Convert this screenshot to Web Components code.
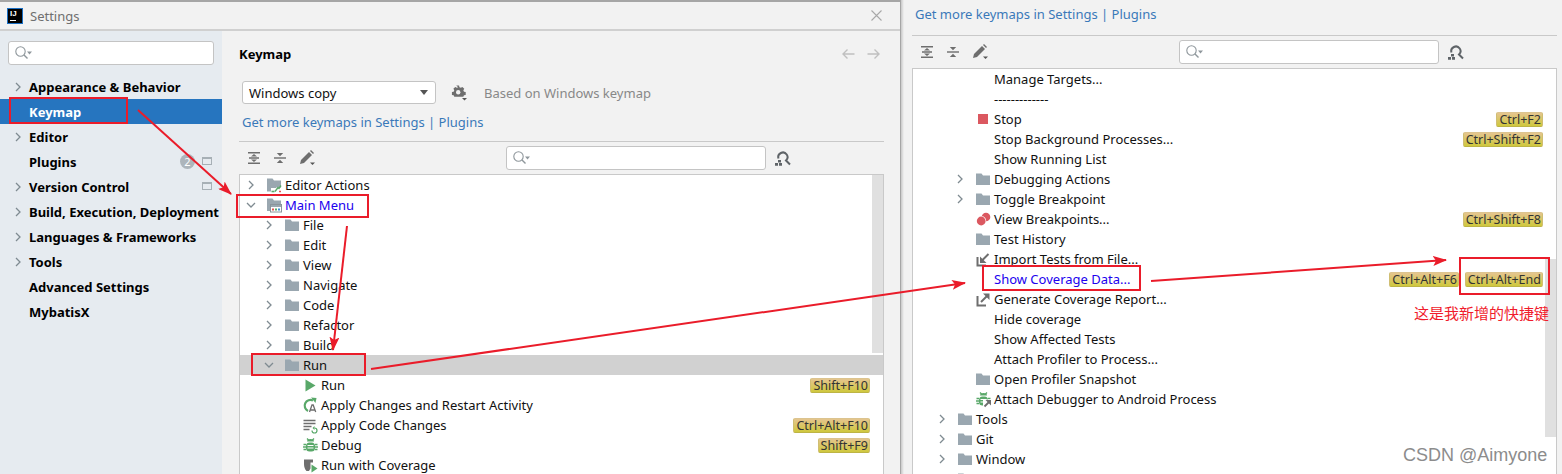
<!DOCTYPE html>
<html><head><meta charset="utf-8">
<style>
html,body{margin:0;padding:0;background:#f2f2f2;height:474px;overflow:hidden}
body{font-family:"Noto Sans","Noto Sans CJK SC",sans-serif;font-size:13px;color:#000;position:relative}
#stage{display:flex;height:474px;overflow:hidden}
</style></head><body>
<div id="stage">
<settings-dialog>
  <side-item slot="side" arrow label="Appearance &amp; Behavior"></side-item>
  <side-item slot="side" selected label="Keymap"></side-item>
  <side-item slot="side" arrow label="Editor"></side-item>
  <side-item slot="side" label="Plugins" badge="2" proj></side-item>
  <side-item slot="side" arrow label="Version Control" proj></side-item>
  <side-item slot="side" arrow label="Build, Execution, Deployment"></side-item>
  <side-item slot="side" arrow label="Languages &amp; Frameworks"></side-item>
  <side-item slot="side" arrow label="Tools"></side-item>
  <side-item slot="side" label="Advanced Settings"></side-item>
  <side-item slot="side" label="MybatisX"></side-item>
  <keymap-tree slot="tree" thumb="0,178">
    <tree-row depth="0" arrow="r" icon="editor" label="Editor Actions"></tree-row>
    <tree-row depth="0" arrow="d" icon="menu" label="Main Menu" link></tree-row>
    <tree-row depth="1" arrow="r" icon="folder" label="File"></tree-row>
    <tree-row depth="1" arrow="r" icon="folder" label="Edit"></tree-row>
    <tree-row depth="1" arrow="r" icon="folder" label="View"></tree-row>
    <tree-row depth="1" arrow="r" icon="folder" label="Navigate"></tree-row>
    <tree-row depth="1" arrow="r" icon="folder" label="Code"></tree-row>
    <tree-row depth="1" arrow="r" icon="folder" label="Refactor"></tree-row>
    <tree-row depth="1" arrow="r" icon="folder" label="Build"></tree-row>
    <tree-row depth="1" arrow="d" icon="folder" label="Run" selected></tree-row>
    <tree-row depth="2" icon="run" label="Run" keys="Shift+F10"></tree-row>
    <tree-row depth="2" icon="applyrestart" label="Apply Changes and Restart Activity"></tree-row>
    <tree-row depth="2" icon="applycode" label="Apply Code Changes" keys="Ctrl+Alt+F10"></tree-row>
    <tree-row depth="2" icon="debug" label="Debug" keys="Shift+F9"></tree-row>
    <tree-row depth="2" icon="coverage" label="Run with Coverage"></tree-row>
  </keymap-tree>
</settings-dialog>
<keymap-panel>
  <keymap-tree thumb="190,178">
    <tree-row depth="2" label="Manage Targets..."></tree-row>
    <tree-row depth="2" label="-------------"></tree-row>
    <tree-row depth="2" icon="stop" label="Stop" keys="Ctrl+F2"></tree-row>
    <tree-row depth="2" label="Stop Background Processes..." keys="Ctrl+Shift+F2"></tree-row>
    <tree-row depth="2" label="Show Running List"></tree-row>
    <tree-row depth="2" arrow="r" icon="folder" label="Debugging Actions"></tree-row>
    <tree-row depth="2" arrow="r" icon="folder" label="Toggle Breakpoint"></tree-row>
    <tree-row depth="2" icon="breakpoints" label="View Breakpoints..." keys="Ctrl+Shift+F8"></tree-row>
    <tree-row depth="2" icon="folder" label="Test History"></tree-row>
    <tree-row depth="2" icon="import" label="Import Tests from File..."></tree-row>
    <tree-row depth="2" label="Show Coverage Data..." link keys="Ctrl+Alt+F6" keys2="Ctrl+Alt+End"></tree-row>
    <tree-row depth="2" icon="export" label="Generate Coverage Report..."></tree-row>
    <tree-row depth="2" label="Hide coverage"></tree-row>
    <tree-row depth="2" label="Show Affected Tests"></tree-row>
    <tree-row depth="2" label="Attach Profiler to Process..."></tree-row>
    <tree-row depth="2" icon="folder" label="Open Profiler Snapshot"></tree-row>
    <tree-row depth="2" icon="attach" label="Attach Debugger to Android Process"></tree-row>
    <tree-row depth="1" arrow="r" icon="folder" label="Tools"></tree-row>
    <tree-row depth="1" arrow="r" icon="folder" label="Git"></tree-row>
    <tree-row depth="1" arrow="r" icon="folder" label="Window"></tree-row>
    <tree-row depth="1" arrow="r" icon="folder" label="Help"></tree-row>
  </keymap-tree>
</keymap-panel>
</div>
<annotation-layer></annotation-layer>
<script>
const ICONS={
folder:'<path d="M1 2.5h5.5l1.5 2h7v9.5H1z" fill="#9aa7b0"/>',
editor:'<path d="M1 1.5h5.5l1.5 2h7v7H10v4H1z" fill="#9aa7b0"/><rect x="5" y="11" width="10" height="4" fill="#fff"/><path d="M5.5 14.5h3" stroke="#59a869" stroke-width="1.6"/><path d="M9 14.5l3-4 1 1 2-3" stroke="#59a869" stroke-width="1.4" fill="none"/><path d="M13 14.5h2" stroke="#e05555" stroke-width="1.6"/>',
menu:'<path d="M1 1.5h5.5l1.5 2h7v4H1z" fill="#9aa7b0"/><path d="M1 7h4v7H1z" fill="#9aa7b0"/><rect x="4.5" y="7.5" width="11" height="7.5" fill="#fff" stroke="#8a949b"/><rect x="5" y="8" width="10" height="2" fill="#9aa7b0"/><rect x="6" y="11.5" width="2" height="2" fill="#e05555"/><rect x="9" y="11.5" width="2" height="2" fill="#59a869"/><rect x="12" y="11.5" width="2" height="2" fill="#3d8fd6"/>',
run:'<path d="M3.5 2.5l10 6-10 6z" fill="#59a869"/>',
applyrestart:'<path d="M11 3.5A5.5 5.5 0 1 0 6 14" stroke="#59a869" stroke-width="2.2" fill="none"/><path d="M9 0.5l5.5 .5-1 5z" fill="#59a869"/><text/><path d="M7.5 15l2.5-7h1.2l2.5 7m-5-2h4" stroke="#6e6e6e" stroke-width="1.3" fill="none"/>',
applycode:'<path d="M1.5 3.5h12M1.5 6.5h12M1.5 9.5h8M1.5 12.5h6" stroke="#6e6e6e" stroke-width="1.4"/><path d="M10 13.5a2.5 2.5 0 1 0 2.5-2.5" stroke="#59a869" stroke-width="1.2" fill="none"/><path d="M12.5 9l-2 2 2 2z" fill="#59a869"/>',
debug:'<path d="M5 4.5a3.5 2.5 0 0 1 7 0z" fill="#59a869"/><rect x="4" y="5.5" width="9" height="9" rx="3.5" fill="#59a869"/><path d="M4 7.5H1.5M4 10h-3M4 12.5H1.5M13 7.5h2.5M13 10h3M13 12.5h2.5M5 1.5l2 2M12 1.5l-2 2" stroke="#59a869" stroke-width="1.3"/><path d="M5.5 8.5h6M5.5 11h6" stroke="#fff" stroke-width="1"/>',
coverage:'<path d="M2 2.5h9v3H8.5v6L7 14H4.5C3 12.5 2 10 2 7z" fill="#6e6e6e"/><path d="M9.5 7.5l6 4-6 4z" fill="#59a869"/>',
stop:'<rect x="3" y="3" width="10" height="10" fill="#db5860"/>',
breakpoints:'<circle cx="11" cy="6" r="4.3" fill="#db5860"/><circle cx="6.2" cy="10" r="5" fill="#fff"/><circle cx="6.2" cy="10" r="4.4" fill="#db5860"/>',
import:'<path d="M2.5 6v8.5H11" stroke="#6e6e6e" stroke-width="2" fill="none"/><path d="M13.5 3L7 9.5" stroke="#6e6e6e" stroke-width="2"/><path d="M5 5.5v6.5h6.5z" fill="#6e6e6e"/>',
export:'<path d="M2.5 5v9.5H11" stroke="#6e6e6e" stroke-width="2" fill="none"/><path d="M6 11l6-6" stroke="#6e6e6e" stroke-width="2"/><path d="M8 2.5h6.5V9z" fill="#6e6e6e"/>',
attach:'<path d="M5 4.5a3.5 2.5 0 0 1 7 0z" fill="#59a869"/><rect x="4" y="5.5" width="9" height="9" rx="3.5" fill="#59a869"/><path d="M4 7.5H1.5M4 10h-3M4 12.5H1.5M13 7.5h2.5M5 1.5l2 2M12 1.5l-2 2" stroke="#59a869" stroke-width="1.3"/><path d="M5.5 8.5h6M5.5 11h4" stroke="#fff" stroke-width="1"/><rect x="8" y="8.5" width="9" height="9" fill="#fff"/><path d="M9.5 15.5l5-5" stroke="#6e6e6e" stroke-width="1.8"/><path d="M10.5 9h5.5v5.5z" fill="#6e6e6e"/>'
};
const TB={
expand:'<svg width="14" height="14" viewBox="0 0 14 14"><path d="M1 1h12v1.5H1zM1 11.5h12V13H1zM2 6.3h10v1.4H2z" fill="#6e6e6e"/><path d="M7 3l3 2.6H4zM7 11l3-2.6H4z" fill="#6e6e6e"/></svg>',
collapse:'<svg width="14" height="14" viewBox="0 0 14 14"><path d="M1 6.3h12v1.4H1z" fill="#6e6e6e"/><path d="M7 5.3l3.2-3.3H3.8zM7 8.7l3.2 3.3H3.8z" fill="#6e6e6e"/></svg>',
pencil:'<svg width="18" height="16" viewBox="0 0 18 16"><path d="M1 14l1-4L10 2l3 3-8 8z" fill="#6e6e6e"/><path d="M11 1l1-1 3 3-1 1z" fill="#6e6e6e"/><path d="M11 12.5h5l-2.5 2.5z" fill="#555"/></svg>',
mag:'<svg width="20" height="16" viewBox="0 0 20 16"><circle cx="6.5" cy="6.5" r="4.7" fill="none" stroke="#8f979c" stroke-width="1.1"/><path d="M10 10l3.5 3.5" stroke="#8f979c" stroke-width="1.4"/><path d="M13 6.5h5l-2.5 3z" fill="#8f979c"/></svg>',
find:'<svg width="16" height="15" viewBox="0 0 16 15"><path d="M3.5 7.5a4.6 4.6 0 1 1 7.5 2l4 4" fill="none" stroke="#5f6468" stroke-width="2"/><path d="M3 9h3v2.5H3zM0 12h3v2.7H0zM4 12h3v2.7H4z" fill="#5f6468"/></svg>'
};
function def(name,html,init){customElements.define(name,class extends HTMLElement{constructor(){super();this.attachShadow({mode:'open'})}connectedCallback(){this.shadowRoot.innerHTML=typeof html==='function'?html(this):html;init&&init(this)}})}
const esc=s=>(s||'').replace(/&/g,'&amp;').replace(/</g,'&lt;');
const chev=d=>d==='d'?'<svg width="12" height="12" viewBox="0 0 12 12"><path d="M2 4l4 4 4-4" fill="none" stroke="#7f8b91" stroke-width="1.3"/></svg>':'<svg width="12" height="12" viewBox="0 0 12 12"><path d="M4 2l4 4-4 4" fill="none" stroke="#7f8b91" stroke-width="1.3"/></svg>';

def('search-box',h=>`<style>:host{display:flex;align-items:center;box-sizing:border-box;height:24px;width:${h.getAttribute('w')}px;background:#fff;border:1px solid #c4c4c4;border-radius:3px;padding-left:5px}</style>${TB.mag}`);

def('key-badge',`<style>:host{display:inline-block;box-sizing:border-box;height:15px;line-height:13px;padding:0 1px 0 2px;font-size:12.5px;color:#333;background:linear-gradient(#e5c58f,#cfc83d);border:1px solid #d0be73;border-top-color:#dcc48f;border-bottom-color:#bdb445;border-radius:2px;white-space:nowrap}</style><slot></slot>`);

def('tree-row',h=>{
 const d=+h.getAttribute('depth')||0,ic=h.getAttribute('icon'),a=h.getAttribute('arrow');
 const k=h.getAttribute('keys'),k2=h.getAttribute('keys2');
 return `<style>
 :host{display:flex;align-items:center;height:20px;box-sizing:border-box;padding-left:${5+18*d}px;padding-right:${h.hasAttribute('selected')?0:13}px;white-space:nowrap;color:#111;background:${h.hasAttribute('selected')?'#d1d1d1':'transparent'};position:relative;z-index:${h.hasAttribute('selected')?1:0}}
 .a{width:12px;height:12px;flex:none;margin-right:9px;display:flex}
 .i{width:16px;height:16px;flex:none;margin-right:3px;display:block}
 .t{flex:1;color:${h.hasAttribute('link')?'#2000ee':'#111'}}
 .k{display:flex;gap:4px}
 </style><span class="a">${a?chev(a):''}</span><span class="i">${ic?`<svg width="18" height="18" viewBox="0 0 18 18" style="overflow:visible;display:block">${ICONS[ic]}</svg>`:''}</span><span class="t">${esc(h.getAttribute('label'))}</span><span class="k">${k?`<key-badge>${k}</key-badge>`:''}${k2?`<key-badge style="margin-left:2px">${k2}</key-badge>`:''}</span>`});

def('keymap-tree',h=>{
 const [t,ht]=(h.getAttribute('thumb')||'0,0').split(',');
 return `<style>:host{display:block;flex:1;box-sizing:border-box;background:#fff;border:1px solid #c9c9c9;border-bottom:none;overflow:hidden;position:relative}
 .thumb{position:absolute;right:0;top:${t}px;height:${ht}px;width:11px;background:#e0e0e0;z-index:0}</style><div class="thumb"></div><slot></slot>`});

def('key-toolbar',h=>`<style>:host{display:flex;align-items:center;height:32px;box-sizing:border-box;padding:0 0 0 8px;flex:none}
 .b{display:flex;align-items:center;width:26px}
 search-box{margin-left:${h.getAttribute('gap')}px}
 .f{margin-left:9px;display:flex}</style>
 <span class="b">${TB.expand}</span><span class="b">${TB.collapse}</span><span class="b">${TB.pencil}</span><search-box w="${h.getAttribute('w')}"></search-box><span class="f">${TB.find}</span>`);

def('side-item',h=>{
 const sel=h.hasAttribute('selected');
 return `<style>:host{display:flex;align-items:center;height:25px;padding-left:12px;background:${sel?'#2675bf':'transparent'};color:${sel?'#fff':'#000'};font-weight:700;font-size:13px;white-space:nowrap;position:relative}
 .a{width:12px;height:12px;margin-right:5px;display:flex}
 .r{position:absolute;left:180px;top:5px;width:15px;height:15px;border-radius:50%;background:#adb5bb;color:#fff;font-size:11px;font-weight:400;line-height:15px;text-align:center}
 .p{position:absolute;left:202px;top:8px;width:10px;height:8px;box-sizing:border-box;border:1px solid #a7b0b6;border-top-width:2px}
 </style><span class="a">${h.hasAttribute('arrow')?chev('r'):''}</span><span>${esc(h.getAttribute('label'))}</span>${h.getAttribute('badge')?`<span class="r">${h.getAttribute('badge')}</span>`:''}${h.hasAttribute('proj')?'<span class="p"></span>':''}`});

def('settings-dialog',`<style>
 :host{display:flex;flex-direction:column;width:901px;flex:none;box-sizing:border-box;height:474px;background:#f2f2f2;border-top:2px solid #a6a6a6;border-right:1px solid #a6a6a6}
 .title{display:flex;align-items:center;height:27px;flex:none;border-bottom:2px solid #d0d0d0;box-sizing:content-box;padding:0 17px 0 7px;color:#6f6f6f;font-size:13px;margin-bottom:0}
 .logo{width:16px;height:16px;box-sizing:border-box;background:#000;border:1px solid #1a6fc4;color:#fff;font:700 8px/10px "Liberation Sans",sans-serif;letter-spacing:0;padding-left:2px;margin-right:7px;position:relative}
 .logo:after{content:"";position:absolute;left:2px;bottom:2px;width:6px;height:1px;background:#fff}
 .close{margin-left:auto;display:flex}
 .body{display:flex;flex:1;min-height:0}
 .side{width:222px;flex:none;background:#e6ebf0;display:flex;flex-direction:column}
 .sr{padding:10px 8px 9px}
 .main{flex:1;min-width:0;display:flex;flex-direction:column;padding:0 16px 0 17px}
 .h{display:flex;align-items:center;justify-content:space-between;font-weight:700;height:44px;flex:none;padding-right:3px;margin-top:1px}
 .nav{display:flex;gap:12px}
 .combo-row{display:flex;align-items:center;padding-left:3px;height:23px;margin-top:5px;flex:none}
 .combo{display:flex;align-items:center;justify-content:space-between;box-sizing:border-box;width:194px;height:23px;background:#fff;border:1px solid #c4c4c4;border-radius:3px;padding:0 7px 0 6px;color:#111}
 .tri{width:0;height:0;border:4.5px solid transparent;border-top:5.5px solid #555;border-bottom:0}
 .gear{margin:0 16px 0 15px;display:flex}
 .based{color:#888}
 .link{color:#3a79b9;padding-left:3px;height:25px;line-height:25px;margin-top:6px;flex:none}
 .sep{height:1px;background:#c9c9c9;flex:none;margin-top:6px}
 </style>
 <div class="title"><span class="logo">IJ</span><span>Settings</span><span class="close"><svg width="13" height="13" viewBox="0 0 13 13"><path d="M1.5 1.5l10 10M11.5 1.5l-10 10" stroke="#a8a8a8" stroke-width="1.1"/></svg></span></div>
 <div class="body"><div class="side"><div class="sr"><search-box w="206"></search-box></div><slot name="side"></slot></div>
 <div class="main">
  <div class="h"><span>Keymap</span><span class="nav"><svg width="14" height="12" viewBox="0 0 14 12"><path d="M13.5 6H2M6.5 1.5L2 6l4.5 4.5" fill="none" stroke="#c0c0c0" stroke-width="1.4"/></svg><svg width="14" height="12" viewBox="0 0 14 12"><path d="M.5 6H12M7.500 1.500L12 6l-4.500 4.500" fill="none" stroke="#c0c0c0" stroke-width="1.400"/></svg></span></div>
  <div class="combo-row"><span class="combo"><span>Windows copy</span><span class="tri"></span></span><span class="gear"><svg width="17" height="16" viewBox="0 0 17 16"><path d="M6 1h3l.4 1.800 1.500.7 1.600-1 2 2-1 1.600.7 1.500 1.800.4v0h-.0v3l-1.800.4-.7 1.500H4l-.7-1.500L1.500 11V8l1.800-.4.700-1.500-1-1.600 2-2 1.600 1 1.500-.7z" fill="#6e6e6e" transform="translate(-.5 -.5) scale(.95)"/><circle cx="7.200" cy="7.200" r="2.200" fill="#f2f2f2"/><path d="M11 13h5l-2.500 2.500z" fill="#555"/></svg></span><span class="based">Based on Windows keymap</span></div>
  <div class="link">Get more keymaps in Settings | Plugins</div>
  <div class="sep"></div>
  <key-toolbar gap="181" w="260"></key-toolbar>
  <slot name="tree"></slot>
 </div></div>`);

def('keymap-panel',`<style>
 :host{display:flex;flex-direction:column;flex:1;min-width:0;box-sizing:border-box;height:474px;padding:0 5px 0 11px;background:linear-gradient(90deg,#c8c8c8 0,#f2f2f2 3px)}
 .link{color:#3a79b9;height:29px;line-height:29px;padding-left:3px;flex:none}
 .sep{height:1px;background:#c9c9c9;flex:none;margin-top:6px}
 ::slotted(keymap-tree){flex:1}
 </style><div class="link">Get more keymaps in Settings | Plugins</div><div class="sep"></div><key-toolbar gap="181" w="260"></key-toolbar><slot></slot>`);

def('annotation-layer',`<style>
 :host{position:absolute;left:0;top:0;width:1562px;height:474px;pointer-events:none;z-index:5;display:block}
 svg{position:absolute;left:0;top:0}
 .note{position:absolute;left:1414px;top:303px;font:15px/20px "Noto Sans CJK SC",sans-serif;color:#f01c2c;white-space:nowrap}
 .wm{position:absolute;left:1403px;top:443px;font:18px/24px "Liberation Sans",sans-serif;color:#8c8c8c;white-space:nowrap;text-shadow:0 0 1px #fff}
 </style>
 <svg width="1562" height="474"><defs><marker id="m" markerUnits="userSpaceOnUse" markerWidth="14" markerHeight="10" refX="13" refY="5" orient="auto"><path d="M0 0l14 5-14 5 3-5z" fill="#ea1c2a"/></marker></defs>
 <g fill="none" stroke="#ea1c2a" stroke-width="2">
 <rect x="10" y="98" width="117" height="25"/><rect x="237" y="195" width="131" height="22"/><rect x="252" y="354" width="113" height="21"/><rect x="983" y="266" width="157" height="24"/><rect x="1460" y="258" width="89" height="36"/>
 <g marker-end="url(#m)"><path d="M138 110L231 194" marker-end="url(#m)"/><path d="M347 226L333 350" marker-end="url(#m)"/><path d="M371 369L965 283" marker-end="url(#m)"/><path d="M1151 281L1446 260" marker-end="url(#m)"/></g></g></svg>
 <div class="note">这是我新增的快捷键</div><div class="wm">CSDN @Aimyone</div>`);
</script>
</body></html>
